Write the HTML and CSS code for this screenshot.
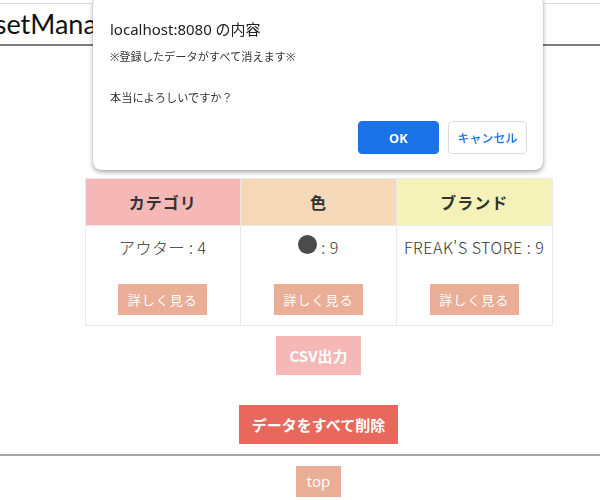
FILE: index.html
```html
<!DOCTYPE html>
<html lang="ja">
<head>
<meta charset="utf-8">
<title>ClosetManager</title>
<link rel="stylesheet" href="styles.css">
</head>
<body>
<div class="page">
  <header class="site-header">
    <h1 class="logo">ClosetManager</h1>
  </header>
  <main class="main">
    <table class="summary">
      <thead>
        <tr>
          <th class="head-cat">カテゴリ</th>
          <th class="head-color">色</th>
          <th class="head-brand">ブランド</th>
        </tr>
      </thead>
      <tbody>
        <tr>
          <td>
            <div class="cell">
              <p class="cell-text">アウター : 4</p>
              <a class="btn-more" href="#">詳しく見る</a>
            </div>
          </td>
          <td>
            <div class="cell">
              <p class="cell-text"><span class="dot"></span> : 9</p>
              <a class="btn-more" href="#">詳しく見る</a>
            </div>
          </td>
          <td>
            <div class="cell">
              <p class="cell-text">FREAK'S STORE : 9</p>
              <a class="btn-more" href="#">詳しく見る</a>
            </div>
          </td>
        </tr>
      </tbody>
    </table>
    <div class="actions">
      <button class="btn-csv" type="button">CSV出力</button>
      <button class="btn-delete" type="button">データをすべて削除</button>
    </div>
  </main>
  <footer class="footer">
    <a class="btn-top" href="#">top</a>
  </footer>
</div>

<div class="dialog" role="dialog">
  <div class="dialog-title">localhost:8080 の内容</div>
  <div class="dialog-msg">※登録したデータがすべて消えます※

本当によろしいですか？</div>
  <div class="dialog-buttons">
    <button class="dlg-ok" type="button">OK</button>
    <button class="dlg-cancel" type="button">キャンセル</button>
  </div>
</div>
</body>
</html>
```

FILE: styles.css
```css
html, body {
  margin: 0;
  padding: 0;
  overflow: hidden;
  background: #fff;
}

body {
  font-family: "Noto Sans CJK JP", "Noto Sans", sans-serif;
  color: #333;
}

.page {
  width: 637px;
}

.site-header {
  margin-top: 3px;
  height: 40px;
  border-top: 1px solid #dcdcdc;
  border-bottom: 2px solid #7c7c7c;
  width: 637px;
  overflow: hidden;
}

.logo {
  margin: 0 0 0 -45px;
  font-family: Lato, "Open Sans", sans-serif;
  font-weight: 400;
  font-size: 27px;
  line-height: 40px;
  color: #111;
  white-space: nowrap;
}

.main {
  padding-top: 132px;
  display: flex;
  flex-direction: column;
  align-items: center;
}

.summary {
  width: 468px;
  border-collapse: collapse;
  table-layout: fixed;
}

.summary th,
.summary td {
  border: 1px solid #e9e9e9;
  padding: 0;
  text-align: center;
}

.summary th {
  height: 46px;
  font-size: 16px;
  font-weight: 700;
  color: #333;
  letter-spacing: 1px;
}

.head-cat { background: #f5b8b7; }
.head-color { background: #f5d8b8; }
.head-brand { background: #f4f2b8; }

.cell {
  display: flex;
  flex-direction: column;
  align-items: center;
  padding: 9px 0 10px;
}

.cell-text {
  margin: 0;
  font-size: 16px;
  font-weight: 300;
  letter-spacing: 0.5px;
  line-height: 25px;
  color: #333;
  white-space: nowrap;
}

.dot {
  display: inline-block;
  width: 19px;
  height: 19px;
  border-radius: 50%;
  background: #4b4b4b;
}

.btn-more {
  margin-top: 24px;
  display: inline-block;
  width: 89px;
  height: 31px;
  line-height: 31px;
  background: #eaae96;
  color: #fff;
  font-size: 13px;
  letter-spacing: 1px;
  text-decoration: none;
}

.actions {
  display: flex;
  flex-direction: column;
  align-items: center;
}

.btn-csv,
.btn-delete {
  border: none;
  color: #fff;
  font-family: "Noto Sans CJK JP", sans-serif;
  font-weight: 700;
  font-size: 15px;
  height: 39px;
  padding: 0;
}

.btn-csv {
  margin-top: 10px;
  width: 85px;
  background: #f5b8b6;
}

.btn-delete {
  margin-top: 30px;
  width: 159px;
  background: #e8685d;
}

.footer {
  margin-top: 10px;
  border-top: 2px solid #a6a6a6;
  padding-top: 10px;
  display: flex;
  justify-content: center;
}

.btn-top {
  display: block;
  width: 45px;
  height: 31px;
  line-height: 31px;
  text-align: center;
  background: #eaae96;
  color: #fff;
  font-family: "Open Sans", "Liberation Sans", sans-serif;
  font-size: 15px;
  text-decoration: none;
}

/* alert dialog overlay */
.dialog {
  position: fixed;
  left: 93px;
  top: -4px;
  width: 450px;
  height: 174px;
  box-sizing: border-box;
  padding: 23px 16px 16px 17px;
  background: #fff;
  border-radius: 8px;
  box-shadow: 0 2px 5px rgba(0, 0, 0, 0.35), 0 0 1px rgba(0, 0, 0, 0.3);
  font-family: "Noto Sans", "Noto Sans CJK JP", sans-serif;
  color: #202124;
  display: flex;
  flex-direction: column;
}

.dialog-title {
  font-size: 15px;
  line-height: 20px;
}

.dialog-msg {
  margin-top: 8px;
  font-size: 11.2px;
  line-height: 20.5px;
  white-space: pre-line;
  color: #333;
}

.dialog-buttons {
  margin-top: auto;
  display: flex;
  justify-content: flex-end;
  gap: 9px;
}

.dlg-ok,
.dlg-cancel {
  height: 33px;
  border-radius: 4px;
  font-family: "Noto Sans", "Noto Sans CJK JP", sans-serif;
  font-size: 12px;
  font-weight: 700;
  padding: 0;
}

.dlg-ok {
  width: 81px;
  background: #1a73e8;
  border: 1px solid #1a6fe0;
  color: #fff;
  font-size: 13px;
}

.dlg-cancel {
  width: 79px;
  background: #fff;
  border: 1px solid #dadce0;
  color: #1a73e8;
  font-weight: 500;
}
```
